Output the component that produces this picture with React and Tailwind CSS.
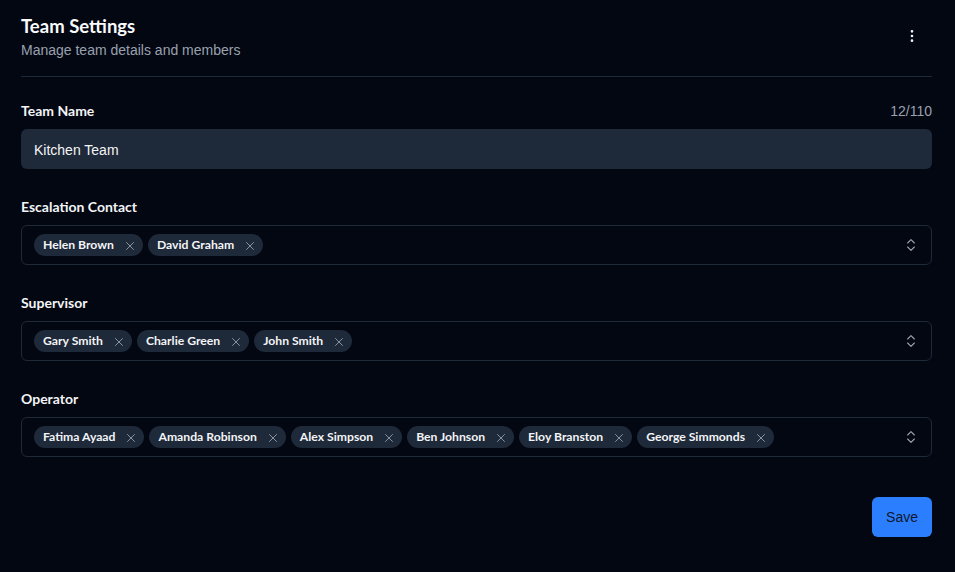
import React, { useState } from 'react'
import { EllipsisVertical, X, ChevronsUpDown } from 'lucide-react'

const initialGroups = [
  { label: 'Escalation Contact', people: ['Helen Brown', 'David Graham'] },
  { label: 'Supervisor', people: ['Gary Smith', 'Charlie Green', 'John Smith'] },
  { label: 'Operator', people: ['Fatima Ayaad', 'Amanda Robinson', 'Alex Simpson', 'Ben Johnson', 'Eloy Branston', 'George Simmonds'] },
]

//one removable name chip
function Chip({ name, onRemove }) {
  return (
    <span className="flex h-[22px] items-center gap-[9px] rounded-full bg-gray-800 pl-[9px] pr-[6px] pt-px font-['Lato',sans-serif] text-[12.2px] font-bold text-gray-100">
      {name}
      <button type="button" onClick={onRemove} className="text-gray-400 hover:text-gray-200">
        <X size={14} strokeWidth={1.5} />
      </button>
    </span>
  )
}

function MultiSelect({ label, people, onRemove }) {
  return (
    <div className="flex flex-col gap-2">
      <label className="font-['Lato',sans-serif] text-sm font-bold text-gray-100">{label}</label>
      <div className="flex h-10 items-center justify-between rounded-md border border-gray-800 pl-3 pr-3">
        <div className="flex items-center gap-[5px]">
          {people.map((p) => (
            <Chip key={p} name={p} onRemove={() => onRemove(p)} />
          ))}
        </div>
        <ChevronsUpDown size={16} strokeWidth={1.75} className="text-gray-400" />
      </div>
    </div>
  )
}

export default function App() {
  const [teamName, setTeamName] = useState('Kitchen Team')
  const [groups, setGroups] = useState(initialGroups)

  const removePerson = (label, name) => {
    setGroups((prev) =>
      prev.map((g) => (g.label === label ? { ...g, people: g.people.filter((p) => p !== name) } : g))
    )
  }

  return (
    <div className="min-h-[572px] bg-[#030712] pl-[21px] pr-[23px] pt-3 font-['Liberation_Sans',sans-serif] text-gray-100">
      <div className="flex items-center justify-between border-b border-gray-800 pb-4">
        <div>
          <h1 className="font-['Lato',sans-serif] text-[18.5px] font-bold leading-7 text-gray-50">Team Settings</h1>
          <p className="text-sm leading-5 text-gray-400">Manage team details and members</p>
        </div>
        <button type="button" className="mr-[4px] flex h-8 w-8 items-center justify-center text-gray-100">
          <EllipsisVertical size={16} />
        </button>
      </div>

      <div className="mt-6 flex flex-col gap-7">
        <div className="flex flex-col gap-2">
          <div className="flex items-center justify-between">
            <label className="font-['Lato',sans-serif] text-sm font-bold text-gray-100">Team Name</label>
            <span className="text-sm text-gray-400">{teamName.length}/110</span>
          </div>
          <input
            value={teamName}
            maxLength={110}
            onChange={(e) => setTeamName(e.target.value)}
            className="h-10 rounded-md bg-gray-800 px-[13px] pt-px text-sm text-gray-100 outline-none"
          />
        </div>

        {groups.map((g) => (
          <MultiSelect key={g.label} label={g.label} people={g.people} onRemove={(name) => removePerson(g.label, name)} />
        ))}
      </div>

      <div className="mt-10 flex justify-end">
        <button type="button" className="h-10 rounded-md bg-blue-500 px-[14px] text-sm text-slate-900 hover:bg-blue-400">
          Save
        </button>
      </div>
    </div>
  )
}
